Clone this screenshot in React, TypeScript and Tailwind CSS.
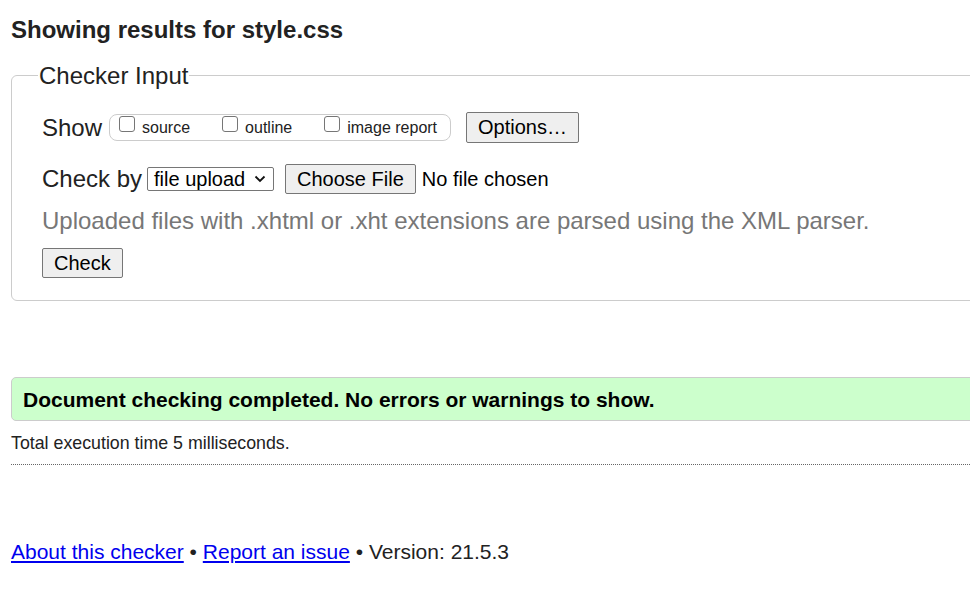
import React from 'react';

function Checkbox({ label }: { label: string }) {
  return (
    <label className="flex items-center gap-[7px]">
      <span className="mb-[7px] w-[16px] h-[16px] rounded-[3px] border border-[#767676] bg-white" />
      <span className="text-[16px] leading-[18px]">{label}</span>
    </label>
  );
}

function Btn({ children, className = '' }: { children: React.ReactNode; className?: string }) {
  return (
    <button
      type="button"
      className={`px-[11px] border border-[#767676] rounded-[2px] bg-[#efefef] text-[20px] text-black ${className}`}
    >
      {children}
    </button>
  );
}

export default function App() {
  return (
    <div className="w-screen h-screen overflow-hidden bg-white">
      <div className="w-[1120px] pl-[11px] font-['Liberation_Sans',Arial,sans-serif] text-[#222]">
        <h2 className="pt-[16px] text-[24px] leading-[28px] font-bold">Showing results for style.css</h2>

        <fieldset className="mt-[16px] pl-[30px] pb-[22px] border border-[#ccc] rounded-[6px]">
          <legend className="ml-[-4px] px-[1px] pt-[2px] text-[24px] leading-[28px]">Checker Input</legend>

          {/* show options */}
          <div className="mt-[22px] h-[31px] flex items-center">
            <span className="text-[24px] leading-[28px]">Show</span>
            <div className="ml-[7px] h-[27px] flex items-center gap-[32px] pl-[9px] pr-[13px] border border-[#ccc] rounded-[8px]">
              <Checkbox label="source" />
              <Checkbox label="outline" />
              <Checkbox label="image report" />
            </div>
            <Btn className="ml-[15px] py-[3px] leading-[23px]">Options…</Btn>
          </div>

          {/* check by */}
          <div className="mt-[21px] h-[30px] flex items-center">
            <span className="text-[24px] leading-[28px]">Check by</span>
            <div className="ml-[5px] w-[127px] h-[24px] flex items-center justify-between pl-[6px] pr-[7px] border border-[#767676] rounded-[2px] bg-white text-[20px] leading-[22px] text-black">
              <span>file upload</span>
              <svg width="12" height="8" viewBox="0 0 12 8" fill="none">
                <path d="M1.5 1.5 6 6l4.5-4.5" stroke="#111" strokeWidth="1.8" />
              </svg>
            </div>
            <Btn className="ml-[11px] py-[3px] leading-[22px]">Choose File</Btn>
            <span className="ml-[6px] text-[20px] leading-[22px] text-black">No file chosen</span>
          </div>

          <p className="mt-[13px] text-[24px] leading-[28px] text-[#777]">
            Uploaded files with .xhtml or .xht extensions are parsed using the XML parser.
          </p>

          <Btn className="mt-[13px] py-[3px] leading-[22px]">Check</Btn>
        </fieldset>

        <div className="mt-[76px] h-[44px] flex items-center pl-[11px] pt-[2px] border border-[#ccc] rounded-[5px] bg-[#ccffcc]">
          <span className="text-[21px] leading-[24px] font-bold text-black">
            Document checking completed. No errors or warnings to show.
          </span>
        </div>

        <p className="mt-[12px] text-[17.8px] leading-[20px]">Total execution time 5 milliseconds.</p>

        <hr className="mt-[11px] border-0 border-t border-dotted border-[#666]" />

        <p className="mt-[75px] text-[21px] leading-[24px]">
          <a href="#" className="text-[#0000ee] underline">About this checker</a>
          {' • '}
          <a href="#" className="text-[#0000ee] underline">Report an issue</a>
          {' • Version: 21.5.3'}
        </p>
      </div>
    </div>
  );
}
